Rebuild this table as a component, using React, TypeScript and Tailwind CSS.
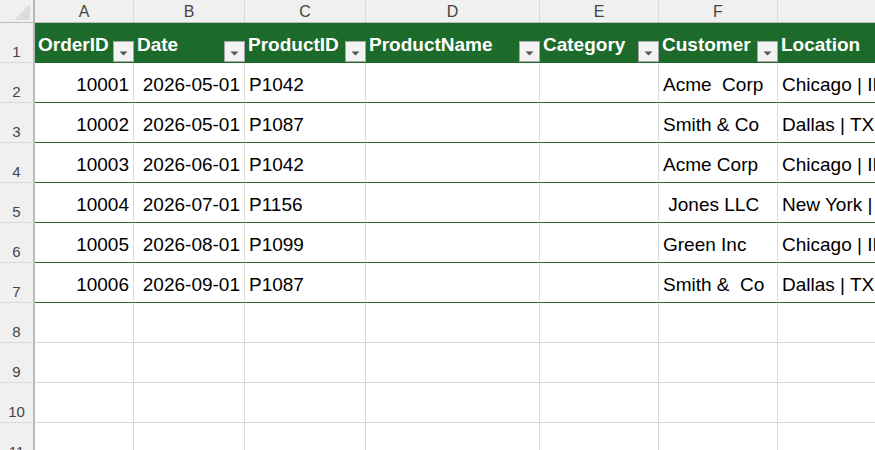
import React from 'react';

const cols = [
  { letter: 'A', w: 'w-[99px]', header: 'OrderID', align: 'justify-end' },
  { letter: 'B', w: 'w-[111px]', header: 'Date', align: 'justify-end' },
  { letter: 'C', w: 'w-[121px]', header: 'ProductID', align: 'justify-start' },
  { letter: 'D', w: 'w-[174px]', header: 'ProductName', align: 'justify-start' },
  { letter: 'E', w: 'w-[119px]', header: 'Category', align: 'justify-start' },
  { letter: 'F', w: 'w-[119px]', header: 'Customer', align: 'justify-start' },
  { letter: 'G', w: 'w-[160px]', header: 'Location', align: 'justify-start' },
];

const rows = [
  ['10001', '2026-05-01', 'P1042', '', '', 'Acme\u00a0\u00a0Corp', 'Chicago | IL'],
  ['10002', '2026-05-01', 'P1087', '', '', 'Smith & Co', 'Dallas | TX'],
  ['10003', '2026-06-01', 'P1042', '', '', 'Acme Corp', 'Chicago | IL'],
  ['10004', '2026-07-01', 'P1156', '', '', '\u00a0Jones LLC', 'New York | NY'],
  ['10005', '2026-08-01', 'P1099', '', '', 'Green Inc', 'Chicago | IL'],
  ['10006', '2026-09-01', 'P1087', '', '', 'Smith &\u00a0\u00a0Co', 'Dallas | TX'],
];

function FilterButton() {
  return (
    <div className="absolute right-0 bottom-[1px] w-[21px] h-[21px] bg-[#f3f3f3] border border-[#a6a6a6] flex items-center justify-center">
      <svg width="9" height="5" viewBox="0 0 9 5" className="mt-[3px]">
        <polygon points="0.5,0.5 8.5,0.5 4.5,4.5" fill="#555555" />
      </svg>
    </div>
  );
}

function RowNum({ n }: { n: number }) {
  return (
    <div className="w-[35px] h-[40px] shrink-0 bg-[#f0f0f0] border-r-2 border-r-[#b8b8b8] border-b border-b-[#dadada] flex items-end justify-center pb-[3px] text-[15px] leading-[15px] text-[#444444]">
      {n}
    </div>
  );
}

export default function App() {
  const font = { fontFamily: '"Liberation Sans", Arial, sans-serif' };
  return (
    <div className="w-[875px] h-[450px] overflow-hidden bg-white" style={font}>
      {/* column letters */}
      <div className="flex h-[23px] bg-[#f0f0f0] border-b border-b-[#bdbdbd]">
        <div className="w-[35px] shrink-0 border-r-2 border-r-[#b8b8b8] relative">
          <svg width="16" height="16" viewBox="0 0 16 16" className="absolute left-[14px] top-[4px]">
            <polygon points="16,0 16,16 0,16" fill="#dcdcdc" />
          </svg>
        </div>
        {cols.map((c) => (
          <div key={c.letter} className={`${c.w} shrink-0 border-r border-r-[#dadada] flex items-center justify-center text-[16px] leading-[16px] text-[#444444] pt-[1px]`}>
            {c.letter === 'G' ? '' : c.letter}
          </div>
        ))}
      </div>

      {/* table header row */}
      <div className="flex">
        <RowNum n={1} />
        {cols.map((c) => (
          <div key={c.header} className={`${c.w} shrink-0 h-[40px] bg-[#1d6b2a] relative flex items-end pb-[9px] pl-[3px] text-white font-bold text-[19px] leading-[19px] whitespace-nowrap`}>
            {c.header}
            {c.letter !== 'G' && <FilterButton />}
          </div>
        ))}
      </div>

      {/* data rows */}
      {rows.map((r, i) => (
        <div key={i} className="flex">
          <RowNum n={i + 2} />
          {cols.map((c, j) => (
            <div key={j} className={`${c.w} shrink-0 h-[40px] border-b border-b-[#266a2f] border-r border-r-[#dadada] flex items-end ${c.align} pb-[8px] px-[4px] text-[19px] leading-[19px] text-black whitespace-nowrap`}>
              {r[j]}
            </div>
          ))}
        </div>
      ))}

      {/* empty rows */}
      {[8, 9, 10, 11].map((n) => (
        <div key={n} className="flex">
          <RowNum n={n} />
          {cols.map((c, j) => (
            <div key={j} className={`${c.w} shrink-0 h-[40px] border-b border-b-[#dadada] border-r border-r-[#dadada]`} />
          ))}
        </div>
      ))}
    </div>
  );
}
